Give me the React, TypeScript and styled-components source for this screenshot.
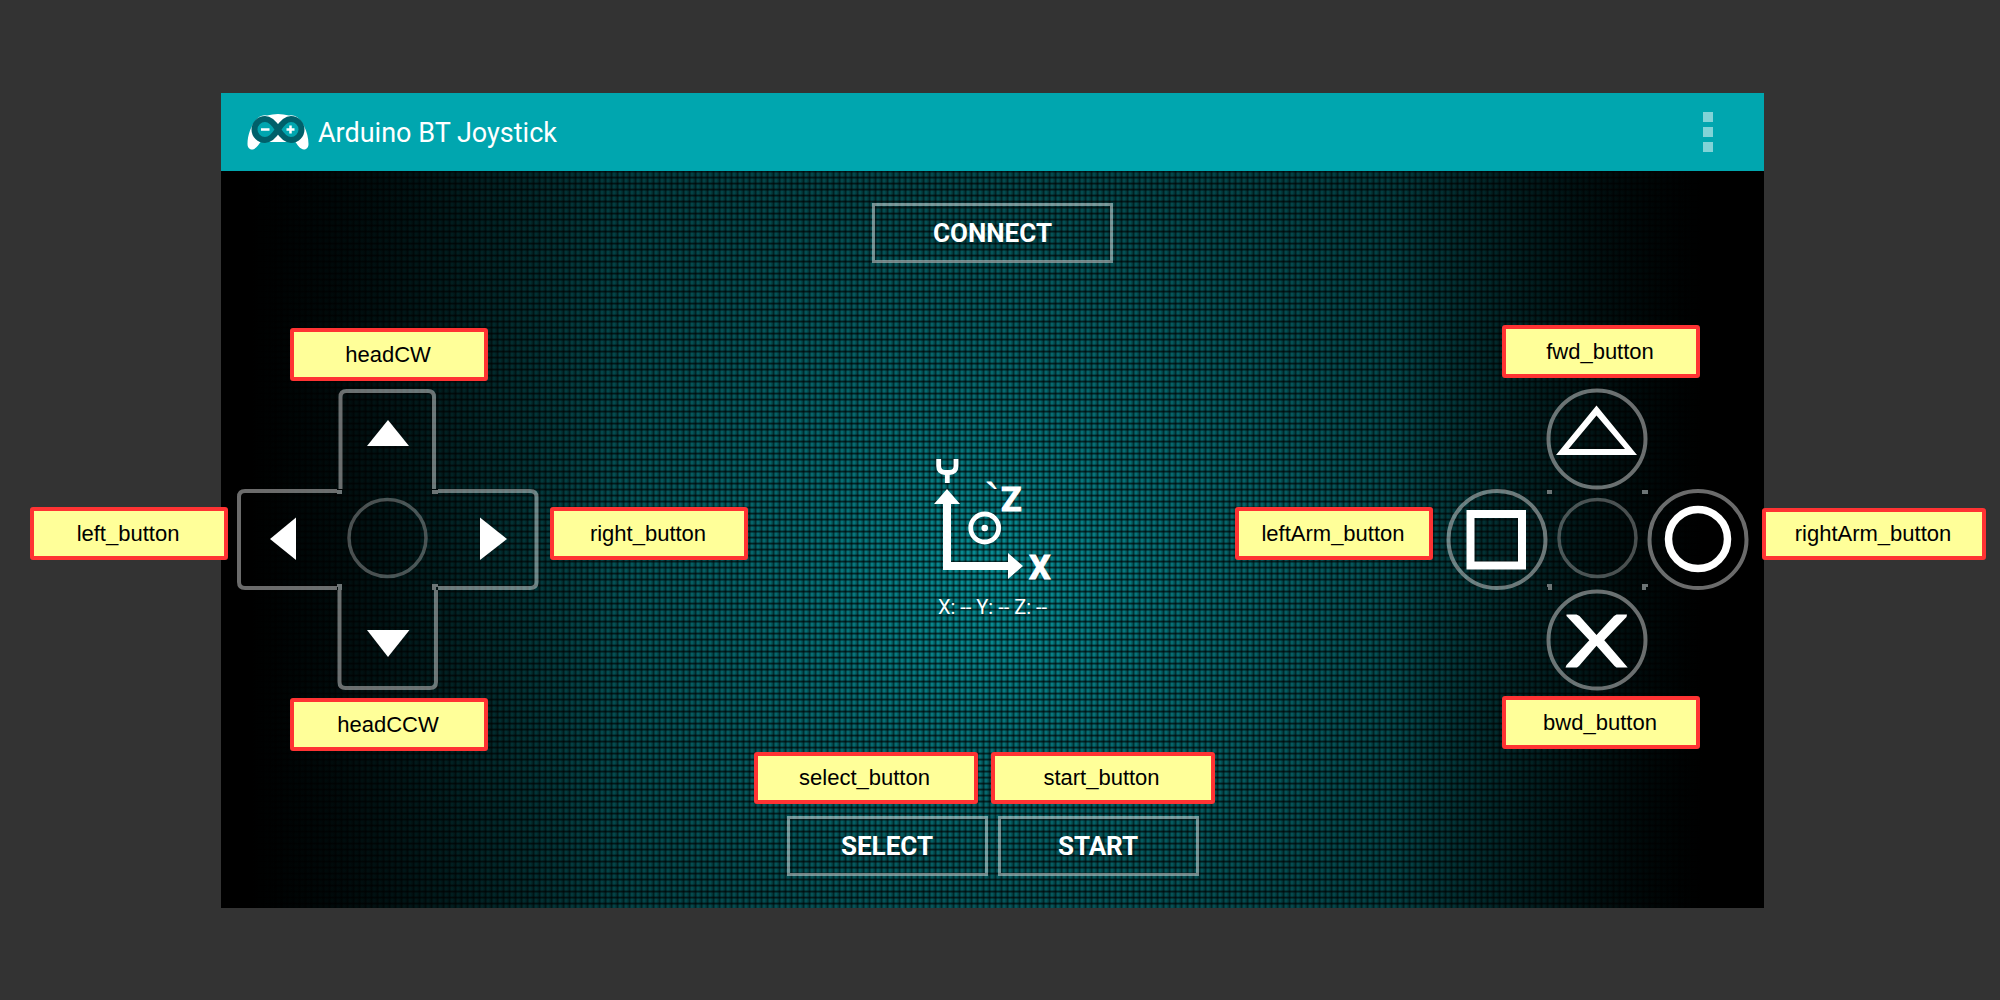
import React from 'react';
import styled, { createGlobalStyle } from 'styled-components';

const GlobalStyle = createGlobalStyle`
  * { box-sizing: border-box; }
  body { margin: 0; background: #333333; }
  button { font: inherit; color: inherit; background: none; border: 0; padding: 0; margin: 0; }
`;

const Page = styled.main`
  display: flex;
  min-height: 100vh;
  padding: 93px 236px 92px 221px;
  font-family: Roboto, 'Liberation Sans', sans-serif;
  color: #ffffff;
`;

const Screen = styled.section`
  flex: 1;
  display: flex;
  flex-direction: column;
`;

const AppBar = styled.header`
  display: flex;
  align-items: center;
  height: 78px;
  padding: 0 51px 1px 26px;
  background: #00a6af;
`;

const Title = styled.h1`
  flex: 1;
  margin: 2px 0 0 9px;
  font-size: 27px;
  font-weight: 400;
  line-height: 32px;
`;

const MenuButton = styled.button`
  display: flex;
  flex-direction: column;
  gap: 5px;
`;

const MenuDot = styled.span`
  width: 10px;
  height: 10px;
  background: #81d3d7;
`;

const Playfield = styled.div`
  flex: 1;
  display: flex;
  justify-content: space-between;
  align-items: center;
  padding: 32px 16px;
  background:
    repeating-linear-gradient(90deg, rgba(0, 0, 0, 0.55) 0 1px, rgba(0, 0, 0, 0) 2px 4px, rgba(0, 0, 0, 0.3) 5px 6px),
    repeating-linear-gradient(180deg, rgba(0, 0, 0, 0.65) 0 1px, rgba(0, 0, 0, 0) 2px 5px, rgba(0, 0, 0, 0.5) 6px),
    linear-gradient(90deg, #000000 2%, rgba(0, 0, 0, 0) 26%, rgba(0, 0, 0, 0) 76%, #000000 96%),
    radial-gradient(ellipse 60% 115% at 50% 56%, #089299 0%, #066b71 22%, #044c50 46%, #023437 72%, #001416 100%);
`;

const CenterColumn = styled.div`
  align-self: stretch;
  display: flex;
  flex-direction: column;
  align-items: center;
  justify-content: space-between;
`;

const ButtonRow = styled.div`
  display: flex;
  gap: 10px;
`;

const ControlSlot = styled.div`
  position: relative;
`;

const OutlineButton = styled.button<{ $wide?: boolean }>`
  width: ${(p) => (p.$wide ? 241 : 201)}px;
  height: 60px;
  border: 3px solid rgba(255, 255, 255, 0.45);
  font-size: 26px;
  font-weight: 700;
  line-height: 32px;
`;

const Orientation = styled.div`
  display: flex;
  flex-direction: column;
  align-items: center;
  gap: 7px;
`;

const Readout = styled.output`
  font-size: 20px;
  line-height: 28px;
`;

const Cluster = styled.div`
  position: relative;
  display: grid;
  grid-template-columns: 100px 101px 100px;
  grid-template-rows: 100px 101px 100px;
  grid-template-areas: '. up .' 'left hub right' '. down .';
`;

const PadButton = styled.button<{ $area: string }>`
  grid-area: ${(p) => p.$area};
`;

const Glyph = styled.svg`
  display: block;
  overflow: visible;
`;

const HubGlyph = styled(Glyph)`
  grid-area: hub;
`;

const Callout = styled.span<{ $x: number; $y: number; $wide?: boolean }>`
  position: absolute;
  z-index: 1;
  left: ${(p) => p.$x}px;
  top: ${(p) => p.$y}px;
  display: flex;
  align-items: center;
  justify-content: center;
  width: ${(p) => (p.$wide ? 224 : 198)}px;
  height: ${(p) => (p.$wide ? 52 : 53)}px;
  padding-right: 2px;
  border: 4px solid #ff3333;
  border-radius: 3px;
  background: #ffff99;
  color: #000000;
  font-family: 'Liberation Sans', Arial, sans-serif;
  font-size: 22px;
  line-height: 26px;
  white-space: nowrap;
`;

const RIM = 'rgba(255,255,255,0.42)';

const Logo = () => (
  <Glyph width="62" height="36" viewBox="0 0 62 36" aria-hidden="true">
    <path
      fill="#fff"
      d="M14 2Q17 1 20 1.500Q31 -1.500 42 1.500Q45 1 48 2C55 5 61.500 18 61.500 30C61.500 34 59 35.500 57 35.500C53 35.500 50 30 48 27.500Q31 28.500 14 27.500C12 30 9 35.500 5 35.500C3 35.500 0.500 34 0.500 30C0.500 18 7 5 14 2Z"
    />
    <path
      fill="#00a6af"
      stroke="#00606a"
      strokeWidth="6"
      d="M31 15.500C27 9 22.500 5 18 5A10.500 10.500 0 0 0 18 26C22.500 26 27 22 31 15.500C35 9 39.500 5 44 5A10.500 10.500 0 0 1 44 26C39.500 26 35 22 31 15.500Z"
    />
    <path stroke="#fff" strokeWidth="2.500" d="M14 15.500H22.500M39.500 15.500H47.500M43.500 11.500V19.500" />
  </Glyph>
);

const Hub = () => (
  <HubGlyph width="101" height="101" viewBox="0 0 101 101" aria-hidden="true">
    <circle cx="50.5" cy="49" r="38.500" fill="none" stroke="rgba(255,255,255,0.29)" strokeWidth="3.500" />
    <path fill="#6d7576" d="M0 1H5V5H0ZM95 1H101V5H95ZM0 95H5V101H1V98H0ZM95 95H101V98H99V101H95Z" />
  </HubGlyph>
);

const arms = [
  { area: 'up', label: 'Head clockwise', w: 101, h: 100, rim: 'M3.500 100V8Q3.500 2 9.500 2H91Q97 2 97 8V100', arrow: 'M51 31L72 57H30Z' },
  { area: 'left', label: 'Left', w: 100, h: 101, rim: 'M100 2H8Q2 2 2 8V93Q2 99 8 99H100', arrow: 'M33 50L59 28.500V71Z' },
  { area: 'right', label: 'Right', w: 100, h: 101, rim: 'M0 2H92Q98.500 2 98.500 8V93Q98.500 99 92 99H0', arrow: 'M69 50L42 28.500V71Z' },
  { area: 'down', label: 'Head counter-clockwise', w: 101, h: 100, rim: 'M2.500 0V92Q2.500 98 8.500 98H93Q99 98 99 92V0', arrow: 'M51 67L72.500 40H30Z' },
];

const actions = [
  { area: 'up', label: 'Forward', w: 101, h: 100, mark: <path fillRule="evenodd" fill="#fff" d="M49.500 16.500L90 66H9ZM49.500 26.500L21.500 60H78Z" /> },
  { area: 'left', label: 'Left arm', w: 100, h: 101, mark: <rect x="23.500" y="25" width="51.500" height="51.500" fill="none" stroke="#fff" strokeWidth="8" /> },
  { area: 'right', label: 'Right arm', w: 100, h: 101, mark: <circle cx="50" cy="50" r="29.500" fill="none" stroke="#fff" strokeWidth="7.500" /> },
  { area: 'down', label: 'Backward', w: 101, h: 100, mark: <path fill="#fff" d="M19.500 24.500H29.500L32.500 26L49.500 45L67 26L69.500 24.500H80L79.500 27L57.300 50.300L80.700 77.500H69.500L67.500 76L49.500 55.700L32 76L30 77.500H18.500L19.500 75L42.300 50.300L19.500 26Z" /> },
];

const AxisDiagram = () => (
  <Glyph width="126" height="128" viewBox="0 0 126 128" role="img" aria-label="Device axes">
    <g fill="none" stroke="#fff" strokeWidth="4.800">
      <path d="M8.700 1V8Q8.700 14.500 15 14.500H19.500Q26 14.500 26 8V1M17.300 14.500V25" />
      <circle cx="54.700" cy="70" r="14" />
    </g>
    <path fill="#fff" d="M17 31L30 46H21V104H78V95L93 108L78 121V112H13V46H4Z" />
    <circle cx="54.700" cy="70" r="3.300" fill="#fff" />
    <g fill="#fff" fontFamily="Roboto, sans-serif" fontWeight="700" fontSize="34">
      <text x="71" y="53" stroke="#fff">Z</text>
      <text x="99" y="121" stroke="#fff">X</text>
      <text x="54" y="59" fontFamily="'Liberation Sans', sans-serif" fontWeight="400" fontSize="48">`</text>
    </g>
  </Glyph>
);

export default function App() {
  return (
    <>
      <GlobalStyle />
      <Page>
        <Screen>
          <AppBar>
            <Logo />
            <Title>Arduino BT Joystick</Title>
            <MenuButton aria-label="More options">
              <MenuDot />
              <MenuDot />
              <MenuDot />
            </MenuButton>
          </AppBar>

          <Playfield>
            <Cluster>
              {arms.map((a) => (
                <PadButton key={a.area} $area={a.area} aria-label={a.label}>
                  <Glyph width={a.w} height={a.h} viewBox={`0 0 ${a.w} ${a.h}`}>
                    <path d={a.rim} fill="none" stroke={RIM} strokeWidth="4" />
                    <path d={a.arrow} fill="#fff" />
                  </Glyph>
                </PadButton>
              ))}
              <Hub />
              <Callout $x={53} $y={-61}>headCW</Callout>
              <Callout $x={-207} $y={118}>left_button</Callout>
              <Callout $x={313} $y={118}>right_button</Callout>
              <Callout $x={53} $y={309}>headCCW</Callout>
            </Cluster>

            <CenterColumn>
              <OutlineButton $wide>CONNECT</OutlineButton>
              <Orientation>
                <AxisDiagram />
                <Readout>X: -- Y: -- Z: --</Readout>
              </Orientation>
              <ButtonRow>
                <ControlSlot>
                  <OutlineButton>SELECT</OutlineButton>
                  <Callout $x={-33} $y={-64} $wide>select_button</Callout>
                </ControlSlot>
                <ControlSlot>
                  <OutlineButton>START</OutlineButton>
                  <Callout $x={-7} $y={-64} $wide>start_button</Callout>
                </ControlSlot>
              </ButtonRow>
            </CenterColumn>

            <Cluster>
              {actions.map((a) => (
                <PadButton key={a.area} $area={a.area} aria-label={a.label}>
                  <Glyph width={a.w} height={a.h} viewBox={`0 0 ${a.w} ${a.h}`}>
                    <circle cx="50" cy={a.h / 2} r="48.500" fill="none" stroke={RIM} strokeWidth="4" />
                    {a.mark}
                  </Glyph>
                </PadButton>
              ))}
              <Hub />
              <Callout $x={55} $y={-64}>fwd_button</Callout>
              <Callout $x={-212} $y={118}>leftArm_button</Callout>
              <Callout $x={315} $y={119} $wide>rightArm_button</Callout>
              <Callout $x={55} $y={307}>bwd_button</Callout>
            </Cluster>
          </Playfield>
        </Screen>
      </Page>
    </>
  );
}
